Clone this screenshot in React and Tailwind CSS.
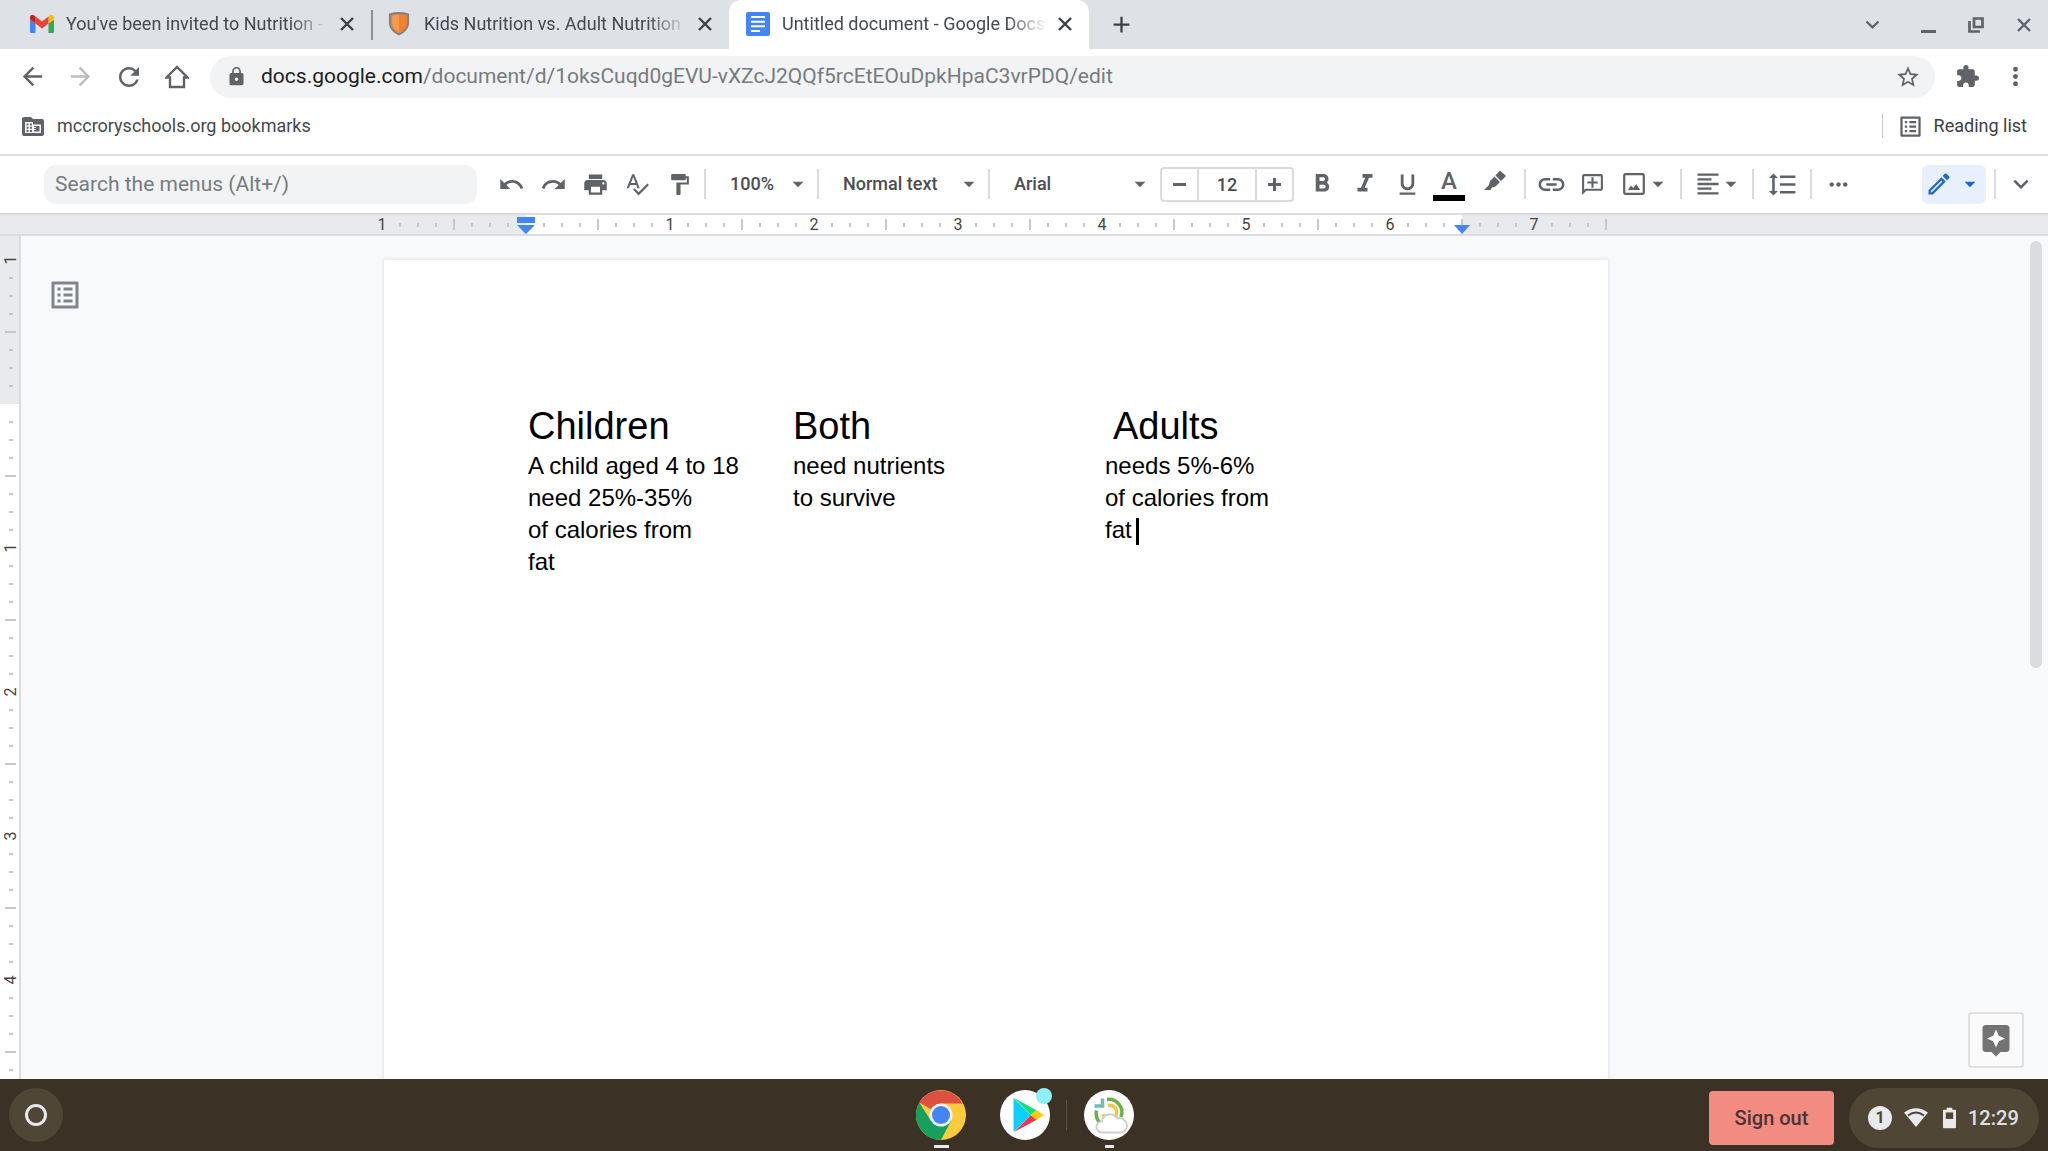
import React from 'react';
import {
  MdUndo, MdRedo, MdPrint, MdSpellcheck, MdFormatPaint, MdFormatBold, MdFormatItalic, MdFormatUnderlined,
  MdLink, MdOutlineAddComment, MdFormatAlignLeft, MdFormatLineSpacing, MdMoreHoriz, MdOutlineModeEdit,
  MdExpandMore, MdArrowBack, MdArrowForward, MdRefresh, MdLock, MdStarBorder, MdExtension, MdMoreVert,
  MdArrowDropDown, MdOutlineListAlt, MdAdd, MdAssistant,
} from 'react-icons/md';

const tabs = [
  { title: "You've been invited to Nutrition -", icon: GmailIcon, width: 'w-[371px]' },
  { title: 'Kids Nutrition vs. Adult Nutrition', icon: ShieldIcon, width: 'w-[358px]' },
  { title: 'Untitled document - Google Docs', icon: DocsIcon, width: 'w-[360px]', active: true },
];

function GmailIcon() {
  return (
    <svg viewBox="0 0 24 18" className="w-6 h-[18px]">
      <path d="M1.6 18h3.9V8.6L0 4.5v11.9C0 17.3.7 18 1.6 18z" fill="#4285f4" />
      <path d="M18.5 18h3.9c.9 0 1.6-.7 1.6-1.6V4.5l-5.5 4.1z" fill="#34a853" />
      <path d="M18.5 1.6v7L24 4.5V2.3c0-2-2.3-3.2-3.9-2z" fill="#fbbc04" />
      <path d="M5.5 8.6v-7l6.5 5 6.5-5v7l-6.5 5z" fill="#ea4335" />
      <path d="M0 2.3v2.2l5.5 4.1v-7L3.9.3C2.3-.9 0 .3 0 2.3z" fill="#c5221f" />
    </svg>
  );
}

function ShieldIcon() {
  return (
    <svg viewBox="0 0 24 26" className="w-[22px] h-6">
      <path d="M2 2.5Q12-.5 22 2.5v10Q21.5 20 12 24.5 2.5 20 2 12.5z" fill="#f08130" stroke="#7b8085" strokeWidth="2" />
      <path d="M12 3v19Q5 18 4.5 12V4Q8 3 12 3z" fill="#f59a52" />
    </svg>
  );
}

function DocsIcon() {
  return (
    <svg viewBox="0 0 24 24" className="w-6 h-6">
      <rect width="24" height="24" rx="2" fill="#4285f4" />
      <path d="M5 5h14M5 9.7h14M5 14.3h14M5 19h9" stroke="#fff" strokeWidth="2" />
    </svg>
  );
}

function CloseIcon() {
  return (
    <svg viewBox="0 0 14 14" className="w-[14px] h-[14px]" fill="none" stroke="currentColor" strokeWidth="2.4">
      <path d="M1 1l12 12M13 1 1 13" />
    </svg>
  );
}

function HomeIcon() {
  return (
    <svg viewBox="0 0 24 24" className="w-6 h-6" fill="none" stroke="currentColor" strokeWidth="2.4">
      <path d="M1.5 12.5 12 2l10.5 10.5H19V22H5v-9.5z" />
    </svg>
  );
}

function ManagedFolderIcon() {
  return (
    <svg viewBox="0 0 22 19" className="w-[22px] h-[19px]">
      <path d="M2 0h7l2 2h9a2 2 0 0 1 2 2v13a2 2 0 0 1-2 2H2a2 2 0 0 1-2-2V2a2 2 0 0 1 2-2z" fill="currentColor" />
      <path d="M3 5h8v2.5h8V16H3z" fill="#fff" />
      <path d="M4.5 6.5h2v2h-2zM8 6.5h2v2H8zM4.5 9.7h2v2h-2zM8 9.7h2v2H8zM4.5 13h2v2h-2zM8 13h2v2H8zM12 9h5.5v5.5H12v-1.500h2v-1h-2v-1h2v-1h-2z" fill="currentColor" />
    </svg>
  );
}

function RestoreIcon() {
  return (
    <svg viewBox="0 0 16 16" className="w-4 h-4" fill="none" stroke="currentColor" strokeWidth="2.7">
      <path d="M6 1.5h8.5V10H6zM1.5 4v10.5H12" />
    </svg>
  );
}

function HighlighterIcon() {
  return (
    <svg viewBox="0 0 24 24" className="w-6 h-6 mb-1.5" fill="currentColor">
      <path d="M17 1.5 23 7 18 12 12.5 6.5zM11.5 7.5 17 13 12.5 17.5 9 18.5 7.5 21H1L6 16 7 12z" />
    </svg>
  );
}

function ImageIcon() {
  return (
    <svg viewBox="0 0 22 22" className="w-[22px] h-[22px]">
      <rect x="1.2" y="1.2" width="19.6" height="19.6" rx="1.5" fill="none" stroke="currentColor" strokeWidth="2.2" />
      <path d="M5 17 8 12.500l2.200 2.500 3-4 4 6z" fill="currentColor" />
    </svg>
  );
}

function ChromeIcon() {
  return (
    <svg viewBox="0 0 50 50" className="w-[50px] h-[50px]">
      <circle cx="25" cy="25" r="25" fill="#fdcb3c" />
      <path d="M25 25 3.3 12.5A25 25 0 0 1 46.7 13.500H25z" fill="#dd4f40" />
      <path d="M3.3 12.5A25 25 0 0 0 25 50L35 31 15 31z" fill="#15a05d" />
      <circle cx="25" cy="25" r="11.5" fill="#f1f1f1" />
      <circle cx="25" cy="25" r="9" fill="#4285f4" />
    </svg>
  );
}

function PlayIcon() {
  return (
    <svg viewBox="0 0 50 50" className="w-[50px] h-[50px]">
      <circle cx="25" cy="25" r="25" fill="#fff" />
      <path d="M13.5 8 31 25 13.5 42z" fill="#0fcffb" />
      <path d="M14 8 37 20.5 31 25z" fill="#13e07c" />
      <path d="M14 42 37 29.5 31 25z" fill="#f43249" />
      <path d="M36 20 44 25 36 30 30.5 25z" fill="#ffc80a" />
    </svg>
  );
}

function CloudSyncIcon() {
  return (
    <svg viewBox="0 0 50 50" className="w-[50px] h-[50px]" fill="none">
      <circle cx="25" cy="25" r="25" fill="#fff" />
      <path d="M23 9.5A13 13 0 0 1 37 27" stroke="#67b346" strokeWidth="3.5" />
      <path d="M12.5 20.5A13 13 0 0 0 17 33.5" stroke="#67b346" strokeWidth="3.5" />
      <path d="M24 15.5A7 7 0 1 1 19 24" stroke="#f5c344" strokeWidth="3.5" />
      <path d="M18.5 8.5v7.5h-8" stroke="#6cc0ae" strokeWidth="3.5" />
      <path d="M18 42.5a5.5 5.5 0 0 1 0-11 8 8 0 0 1 15-3 7 7 0 0 1 5 14z" fill="#fff" stroke="#cfcfcf" strokeWidth="2" />
    </svg>
  );
}

function WifiIcon() {
  return (
    <svg viewBox="0 0 24 20" className="w-6 h-5">
      <path d="M0 4.5Q12-4 24 4.5L12 19z" fill="#e8eaed" />
      <path d="M4 7.5Q12 1.5 20 7.5" fill="none" stroke="#504636" strokeWidth="1.8" />
    </svg>
  );
}

function BatteryIcon() {
  return (
    <svg viewBox="0 0 14 22" className="w-[13px] h-[22px]">
      <path d="M4 0h6v2h3a1 1 0 0 1 1 1v18a1 1 0 0 1-1 1H1a1 1 0 0 1-1-1V3a1 1 0 0 1 1-1h3z" fill="#e8eaed" />
      <path d="M3 5h8v7H3z" fill="#504636" />
    </svg>
  );
}

function Tab({ title, icon: Icon, width, active }) {
  return (
    <div className={`${width} flex items-center h-full pl-[17px] pr-3 pb-0.5 shrink-0 ${active ? 'bg-white rounded-t-xl' : 'first:pl-[30px]'}`}>
      <span className="w-6 shrink-0"><Icon /></span>
      <span className="flex-1 ml-3 overflow-hidden whitespace-nowrap text-lg text-[#45494d] [mask-image:linear-gradient(to_right,#000_85%,transparent)]">
        {title}
      </span>
      <button aria-label="Close tab" className="ml-1.5 w-6 flex justify-center text-[#3c4043]"><CloseIcon /></button>
    </div>
  );
}

function ToolButton({ label, className = 'w-[42px]', children }) {
  return (
    <button aria-label={label} className={`${className} h-10 shrink-0 flex items-center justify-center`}>
      {children}
    </button>
  );
}

function Separator() {
  return <div className="w-0.5 h-[30px] shrink-0 bg-[#dadce0]" />;
}

function ToolSelect({ label, value, className }) {
  return (
    <label className={`${className} relative flex items-center h-10 shrink-0`}>
      <select aria-label={label} className="appearance-none w-full pl-6 bg-transparent text-lg font-medium text-[#4a4e52] outline-none">
        <option>{value}</option>
      </select>
      <MdArrowDropDown size={26} className="absolute right-1.5 pointer-events-none" />
    </label>
  );
}

function rulerLabel(i) {
  if (i % 8 !== 0 || i === 8) return '';
  return Math.abs(i / 8 - 1);
}

function HorizontalRuler() {
  return (
    <div className="flex justify-center h-[23px] shrink-0 pr-[60px] border-y-2 border-[#dadce0] bg-[#e8eaed] overflow-hidden">
      <div className="relative flex w-[1224px] shrink-0">
        {Array.from({ length: 69 }, (_, i) => (
          <div key={i} className={`w-[18px] h-full shrink-0 ${i >= 8 && i < 60 ? 'bg-white' : ''}`}>
            <div className="w-0 h-full flex items-center justify-center text-base leading-none text-[#444]">
              {rulerLabel(i) || <span className={`w-0.5 shrink-0 bg-[#c4c7cb] ${i === 8 ? 'h-0' : i % 4 === 0 ? 'h-[11px]' : 'h-1'}`} />}
            </div>
          </div>
        ))}
        <svg viewBox="0 0 18 17" className="absolute left-[135px] top-0.5 w-[18px] h-[17px]" fill="#4285f4">
          <path d="M0 0h18v6H0zM0 8h18L9 17z" />
        </svg>
        <svg viewBox="0 0 16 9" className="absolute left-[1072px] top-2.5 w-4 h-[9px]" fill="#4285f4">
          <path d="M0 0h16L8 9z" />
        </svg>
      </div>
    </div>
  );
}

function VerticalRuler() {
  return (
    <div className="w-[21px] shrink-0 pl-0.5 border-r-2 border-[#dadce0] bg-[linear-gradient(#e8eaed_168px,#fff_168px)] overflow-hidden">
      <div className="h-6" />
      {Array.from({ length: 46 }, (_, i) => (
        <div key={i} className="h-[18px]">
          <div className="h-0 flex items-center justify-center text-base leading-none text-[#444]">
            {rulerLabel(i) ? (
              <span className="-rotate-90">{rulerLabel(i)}</span>
            ) : (
              <span className={`h-0.5 shrink-0 bg-[#c4c7cb] ${i === 8 ? 'w-0' : i % 4 === 0 ? 'w-[11px]' : 'w-1'}`} />
            )}
          </div>
        </div>
      ))}
    </div>
  );
}

function BrowserChrome() {
  return (
    <header className="shrink-0 text-[#5f6368]">
      <div className="flex items-center h-[49px] bg-[#dee1e6]">
        <Tab {...tabs[0]} />
        <div className="w-0.5 h-[30px] -mr-0.5 bg-[#8d9196]" />
        <Tab {...tabs[1]} />
        <Tab {...tabs[2]} />
        <button aria-label="New tab" className="ml-[19px] text-[#3c4043]"><MdAdd size={27} /></button>
        <div className="flex-1" />
        <button aria-label="Search tabs" className="w-12 mr-2 flex justify-center"><MdExpandMore size={27} /></button>
        <button aria-label="Minimize" className="w-12 h-4 flex items-end justify-center"><span className="w-[15px] h-[3px] bg-[#5f6368]" /></button>
        <button aria-label="Restore" className="w-12 flex justify-center"><RestoreIcon /></button>
        <button aria-label="Close window" className="w-12 flex justify-center"><CloseIcon /></button>
      </div>
      <div className="flex items-center h-[55px] pl-2 pr-[9px] bg-white">
        <button aria-label="Back" className="w-12 flex justify-center"><MdArrowBack size={29} /></button>
        <button aria-label="Forward" className="w-[49px] flex justify-center text-[#babcbe]"><MdArrowForward size={29} /></button>
        <button aria-label="Reload" className="w-12 flex justify-center"><MdRefresh size={30} /></button>
        <button aria-label="Home" className="w-12 flex justify-center"><HomeIcon /></button>
        <div className="flex-1 flex items-center h-[42px] ml-[9px] pl-4 pr-[14px] rounded-full bg-[#f1f3f4]">
          <MdLock size={21} />
          <p className="flex-1 ml-[14px] text-[21px] text-[#777b7f]"><span className="text-[#202124]">docs.google.com</span>/document/d/1oksCuqd0gEVU-vXZcJ2QQf5rcEtEOuDpkHpaC3vrPDQ/edit</p>
          <button aria-label="Bookmark this page"><MdStarBorder size={26} /></button>
        </div>
        <button aria-label="Extensions" className="w-12 ml-2 flex justify-center"><MdExtension size={25} /></button>
        <button aria-label="Browser menu" className="w-12 flex justify-center"><MdMoreVert size={29} /></button>
      </div>
      <div className="flex items-center h-[52px] pl-[22px] pr-[21px] pb-1.5 text-lg bg-white border-b-2 border-[#dadce0]">
        <button className="flex items-center gap-[13px] text-[#45494d]">
          <span className="text-[#5f6368]"><ManagedFolderIcon /></span>
          mccroryschools.org bookmarks
        </button>
        <div className="flex-1" />
        <div className="w-px h-6 bg-[#c6c9cd]" />
        <button className="ml-[14px] flex items-center gap-2.5 text-[#3c4043]">
          <MdOutlineListAlt size={27} className="text-[#5f6368]" />
          Reading list
        </button>
      </div>
    </header>
  );
}

function DocsToolbar() {
  return (
    <div className="flex items-center h-[57px] shrink-0 pl-11 pr-0.5 pb-px bg-white text-[#5f6368]">
      <input aria-label="Search the menus" placeholder="Search the menus (Alt+/)" className="w-[433px] h-[39px] mr-[13px] px-[11px] rounded-xl bg-[#f1f3f4] text-[21px] placeholder:text-[#777b7f] outline-none" />
      <ToolButton label="Undo"><MdUndo size={27} /></ToolButton>
      <ToolButton label="Redo"><MdRedo size={27} /></ToolButton>
      <ToolButton label="Print"><MdPrint size={27} /></ToolButton>
      <ToolButton label="Spelling check"><MdSpellcheck size={26} /></ToolButton>
      <ToolButton label="Paint format" className="w-[42px] mr-1"><MdFormatPaint size={25} /></ToolButton>
      <Separator />
      <ToolSelect label="Zoom" value="100%" className="w-[111px]" />
      <Separator />
      <ToolSelect label="Styles" value="Normal text" className="w-[169px]" />
      <Separator />
      <ToolSelect label="Font" value="Arial" className="w-[169px]" />
      <div className="flex items-center h-[35px] shrink-0 ml-px mr-1.5 border-2 border-[#dadce0] rounded-sm">
        <button aria-label="Decrease font size" className="w-[35px] flex justify-center"><span className="w-[13px] h-[3px] bg-[#5f6368]" /></button>
        <input aria-label="Font size" defaultValue="12" className="w-[60px] h-full border-x-2 border-[#dadce0] text-center text-lg font-medium text-[#4a4e52] outline-none" />
        <button aria-label="Increase font size" className="w-[35px] flex justify-center">
          <svg viewBox="0 0 13 13" className="w-[13px] h-[13px]" fill="currentColor"><path d="M5 0h3v5h5v3H8v5H5V8H0V5h5z" /></svg>
        </button>
      </div>
      <ToolButton label="Bold" className="w-11"><MdFormatBold size={30} /></ToolButton>
      <ToolButton label="Italic"><MdFormatItalic size={30} /></ToolButton>
      <ToolButton label="Underline"><MdFormatUnderlined size={27} /></ToolButton>
      <ToolButton label="Text color">
        <span className="flex flex-col items-center text-2xl leading-7 font-medium border-b-[6px] border-black w-8">A</span>
      </ToolButton>
      <ToolButton label="Highlight color" className="w-[50px] mr-1"><HighlighterIcon /></ToolButton>
      <Separator />
      <ToolButton label="Insert link" className="w-[50px]"><MdLink size={31} /></ToolButton>
      <ToolButton label="Add comment" className="w-8"><MdOutlineAddComment size={25} className="-scale-x-100" /></ToolButton>
      <ToolButton label="Insert image" className="w-[70px] mr-0.5 pl-2"><ImageIcon /><MdArrowDropDown size={26} /></ToolButton>
      <Separator />
      <ToolButton label="Align" className="w-[70px] pl-1"><MdFormatAlignLeft size={28} /><MdArrowDropDown size={26} className="-ml-1" /></ToolButton>
      <Separator />
      <ToolButton label="Line spacing" className="w-14"><MdFormatLineSpacing size={31} /></ToolButton>
      <Separator />
      <ToolButton label="More" className="w-[52px]"><MdMoreHoriz size={27} /></ToolButton>
      <div className="flex-1" />
      <button aria-label="Editing mode" className="flex items-center justify-center gap-1 w-16 h-[39px] mr-2 rounded-md bg-[#e8f0fe] text-[#1967d2]">
        <MdOutlineModeEdit size={28} /><MdArrowDropDown size={26} />
      </button>
      <Separator />
      <ToolButton label="Hide the menus" className="w-[50px]"><MdExpandMore size={30} /></ToolButton>
    </div>
  );
}

function DocumentPage() {
  return (
    <main className="w-[1224px] shrink-0 pt-[142px] pl-[143px] bg-white shadow-[0_0_3px_1px_#e2e4e8] text-black [font-family:'Liberation_Sans',Arial,sans-serif] text-2xl leading-8">
      <div className="grid grid-cols-[265px_312px_1fr]">
        <section className="pl-px">
          <h1 className="text-[38px] leading-[48px]">Children</h1>
          <p>A child aged 4 to 18<br />need 25%-35%<br />of calories from<br />fat</p>
        </section>
        <section className="pl-px">
          <h1 className="text-[38px] leading-[48px]">Both</h1>
          <p>need nutrients<br />to survive</p>
        </section>
        <section className="pl-px">
          <h1 className="pl-2 text-[38px] leading-[48px]">Adults</h1>
          <p>needs 5%-6%<br />of calories from<br />fat<span className="inline-block w-[3px] h-[27px] ml-1 align-middle bg-black" /></p>
        </section>
      </div>
    </main>
  );
}

function Shelf() {
  return (
    <footer className="grid grid-cols-[1fr_auto_1fr] items-center h-[72px] shrink-0 bg-[#3c3125]">
      <button aria-label="Launcher" className="w-[54px] h-[54px] ml-[9px] rounded-full bg-[#504636] flex items-center justify-center">
        <span className="w-[22px] h-[22px] border-[3px] border-[#e8eaed] rounded-full" />
      </button>
      <div className="flex items-center pl-0.5">
        <button aria-label="Chrome" className="relative"><ChromeIcon /><span className="absolute left-[18px] -bottom-2 w-[15px] h-[3px] bg-[#e8eaed]" /></button>
        <button aria-label="Play Store" className="relative ml-[34px]"><PlayIcon /><span className="absolute -right-0.5 -top-0.5 w-4 h-4 rounded-full bg-[#8eeff5]" /></button>
        <div className="w-px h-[30px] ml-4 mr-[17px] bg-[#5c5245]" />
        <button aria-label="Cloud sync" className="relative"><CloudSyncIcon /><span className="absolute left-[21px] -bottom-2 w-[9px] h-[3px] bg-[#e8eaed]" /></button>
      </div>
      <div className="flex items-center justify-end gap-[15px] pr-[9px] pt-1.5">
        <button className="w-[125px] h-[54px] rounded bg-[#f28b82] text-xl font-medium text-[#4c3430]">Sign out</button>
        <button className="flex items-center h-[60px] w-[190px] pl-[19px] rounded-full bg-[#504636] text-xl font-medium text-[#dfe0e0]">
          <span className="w-6 h-6 rounded-full bg-[#e8eaed] text-base leading-6 font-bold text-[#504636]">1</span>
          <span className="ml-3"><WifiIcon /></span>
          <span className="ml-[15px]"><BatteryIcon /></span>
          <span className="ml-3">12:29</span>
        </button>
      </div>
    </footer>
  );
}

export default function App() {
  return (
    <div className="flex flex-col h-screen overflow-hidden [font-family:Roboto,sans-serif]">
      <BrowserChrome />
      <DocsToolbar />
      <HorizontalRuler />
      <div className="flex flex-1 min-h-0">
        <VerticalRuler />
        <div className="relative flex-1 flex justify-center pt-6 pr-[77px] bg-[#f8f9fb] overflow-hidden">
          <DocumentPage />
          <button aria-label="Show document outline" className="absolute left-[26px] top-[41px] text-[#80848b]"><MdOutlineListAlt size={36} /></button>
          <button aria-label="Explore" className="absolute right-6 bottom-[11px] w-14 h-14 flex items-center justify-center rounded border-2 border-[#e0e1e3] bg-[#fafafa] text-[#737373]">
            <MdAssistant size={36} />
          </button>
          <div className="absolute right-1.5 top-[5px] w-3 h-[427px] rounded-full bg-[#dadce0]" />
        </div>
      </div>
      <Shelf />
    </div>
  );
}
